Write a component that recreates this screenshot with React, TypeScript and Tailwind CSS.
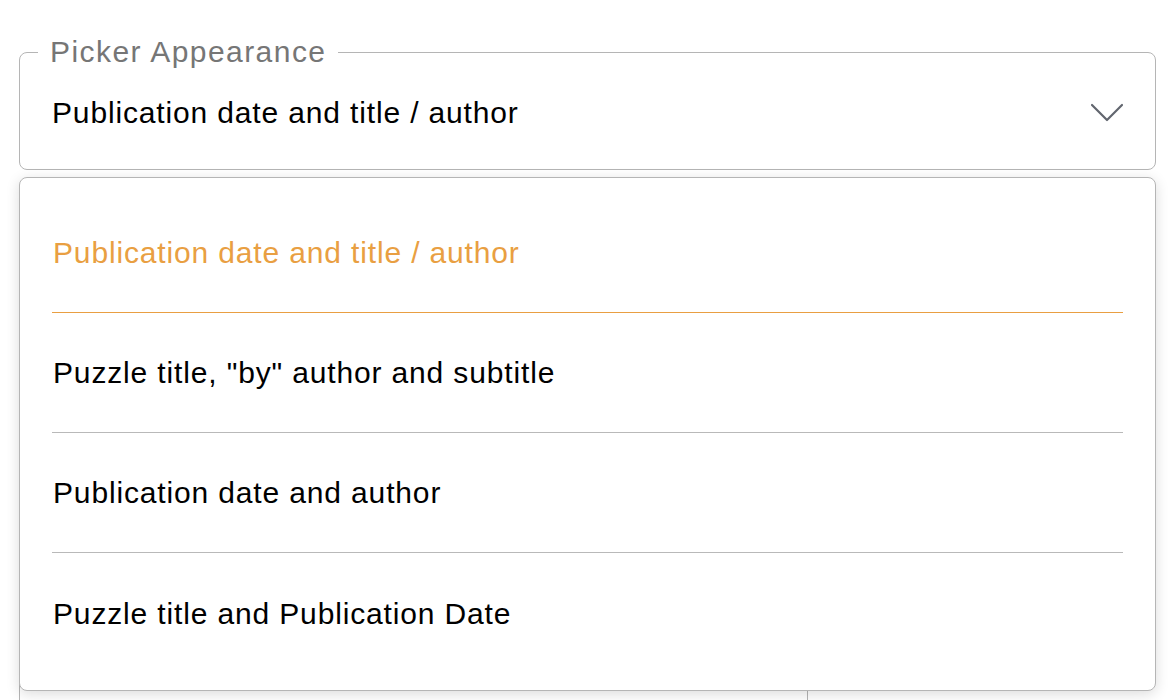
import React from 'react'

const OPTIONS = [
  'Publication date and title / author',
  'Puzzle title, "by" author and subtitle',
  'Publication date and author',
  'Puzzle title and Publication Date',
]

function Chevron() {
  return (
    <svg width="34" height="20" viewBox="0 0 34 20" fill="none" className="text-[#62666f]">
      <path d="M2 2 L17 17 L32 2" stroke="currentColor" strokeWidth="2.2" strokeLinecap="round" strokeLinejoin="round" />
    </svg>
  )
}

export default function App() {
  const selected = 0
  return (
    <div className="relative w-[1174px] h-[700px] overflow-hidden bg-white font-['Liberation_Sans',Arial,sans-serif] text-black">
      <div className="pt-[34px] px-[19px]">
        <fieldset className="border-[1.5px] border-[#b5b5b5] rounded-[8px] ml-0 w-[1137px]">
          <legend className="ml-[18px] px-[12px] text-[30px] leading-[36px] tracking-[1.45px] text-[#767676]">Picker Appearance</legend>
          <div className="h-[99px] pb-[14px] pl-[32px] pr-[31px] flex items-center justify-between">
            <span className="text-[30px] tracking-[0.85px]">{OPTIONS[selected]}</span>
            <Chevron />
          </div>
        </fieldset>

        {/* content under the open menu */}
        <div className="mt-[20px] h-[600px] border-l-[1.5px] border-t-[1.5px] border-[#b5b5b5] rounded-tl-[8px] flex">
          <div className="w-[788px] border-r-[1.5px] border-[#b5b5b5]" />
          <div className="flex-1" />
        </div>
      </div>

      <div className="absolute left-[19px] top-[177px] w-[1137px] h-[514px] bg-white border-[1.5px] border-[#b5b5b5] rounded-[8px] shadow-[0_3px_14px_rgba(0,0,0,0.14)] pt-[15px] pb-[17px] px-[32px]">
        {OPTIONS.map((o, i) => (
          <div
            key={o}
            className={
              'h-[120px] flex items-center pl-px text-[30px] tracking-[0.85px] ' +
              (i === selected
                ? 'text-[#e99f42] border-b-[1.5px] border-[#e99f42]'
                : i < OPTIONS.length - 1
                  ? 'border-b-[1.5px] border-[#b9b9b9]'
                  : '')
            }
          >
            {o}
          </div>
        ))}
      </div>
    </div>
  )
}
